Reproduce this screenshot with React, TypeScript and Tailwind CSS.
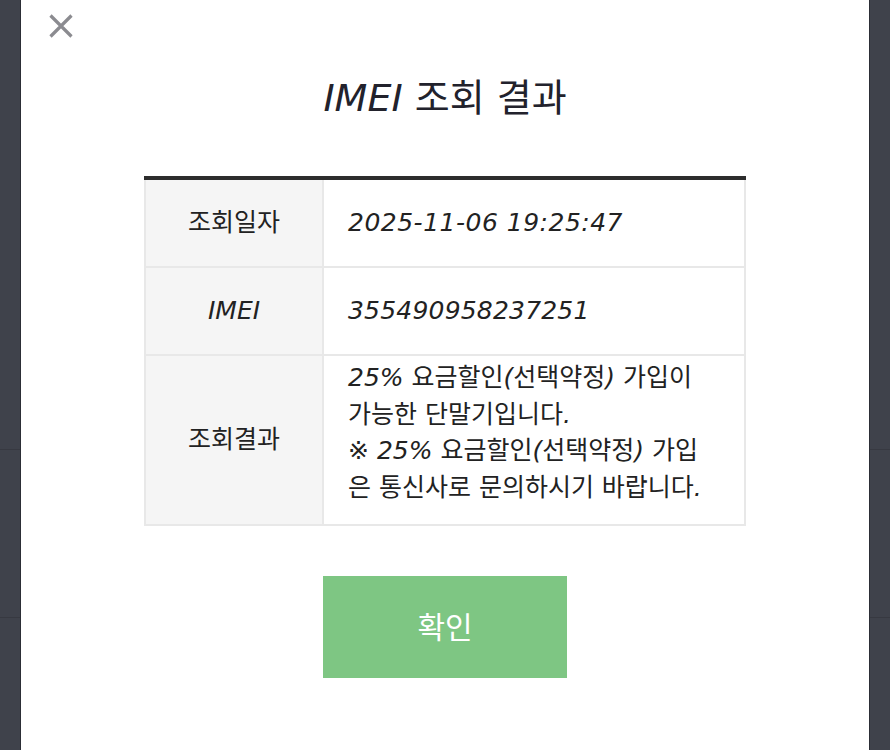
import React from "react";

const L = ({ children }: { children: React.ReactNode }) => (
  <span className="italic">{children}</span>
);

function Side() {
  return (
    <div className="flex flex-col h-full">
      <div className="h-[450px] border-b border-[#373941]" />
      <div className="h-[168px] border-b border-[#373941]" />
      <div className="flex-1" />
    </div>
  );
}

export default function App() {
  const font = { fontFamily: '"DejaVu Sans", "Noto Sans CJK KR", sans-serif' };
  return (
    <div className="w-[890px] h-[750px] bg-[#3f424b] flex overflow-hidden" style={font}>
      <div className="w-[21px] shrink-0 border-r border-[#2c2e36]">
        <Side />
      </div>
      <div className="w-[848px] shrink-0 bg-white flex flex-col items-center relative">
        <button className="absolute left-[25px] top-[11px] w-[30px] h-[30px] flex items-center justify-center">
          <svg width="26" height="26" viewBox="0 0 26 26">
            <path d="M2.5 2.5 L23.5 23.5 M23.5 2.5 L2.5 23.5" stroke="#8b8b90" strokeWidth="3.2" />
          </svg>
        </button>
        <h1 className="mt-[72px] text-[38px] leading-[52px] text-[#22222c]">
          <L>IMEI</L> 조회 결과
        </h1>
        <div className="mt-[52px] w-[602px] border-t-[4px] border-[#2d2d2d]">
          <div className="flex border-b-2 border-[#e8e8e8] h-[88px]">
            <div className="w-[180px] shrink-0 bg-[#f5f5f5] border-l-2 border-r-2 border-[#e8e8e8] flex items-center justify-center text-[25px] text-[#222]">조회일자</div>
            <div className="flex-1 border-r-2 border-[#e8e8e8] flex items-center pl-[24px] text-[25px] text-[#222]">
              <span className="italic tracking-[0.5px]">2025-11-06 19:25:47</span>
            </div>
          </div>
          <div className="flex border-b-2 border-[#e8e8e8] h-[88px]">
            <div className="w-[180px] shrink-0 bg-[#f5f5f5] border-l-2 border-r-2 border-[#e8e8e8] flex items-center justify-center text-[25px] text-[#222]">
              <L>IMEI</L>
            </div>
            <div className="flex-1 border-r-2 border-[#e8e8e8] flex items-center pl-[24px] text-[25px] text-[#222]">
              <span className="italic tracking-[0.2px]">355490958237251</span>
            </div>
          </div>
          <div className="flex border-b-2 border-[#e8e8e8] h-[170px]">
            <div className="w-[180px] shrink-0 bg-[#f5f5f5] border-l-2 border-r-2 border-[#e8e8e8] flex items-center justify-center text-[25px] text-[#222]">조회결과</div>
            <div className="flex-1 border-r-2 border-[#e8e8e8] pl-[24px] pr-[30px] pt-[4px] text-[25px] leading-[36.5px] text-[#222]">
              <L>25%</L> 요금할인<L>(</L>선택약정<L>)</L> 가입이 가능한 단말기입니다<L>.</L>
              <br />※ <L>25%</L> 요금할인<L>(</L>선택약정<L>)</L> 가입은 통신사로 문의하시기 바랍니다<L>.</L>
            </div>
          </div>
        </div>
        <button className="mt-[50px] w-[244px] h-[102px] bg-[#7ec683] text-white text-[30px] flex items-center justify-center">확인</button>
      </div>
      <div className="flex-1 border-l border-[#2c2e36]">
        <Side />
      </div>
    </div>
  );
}
